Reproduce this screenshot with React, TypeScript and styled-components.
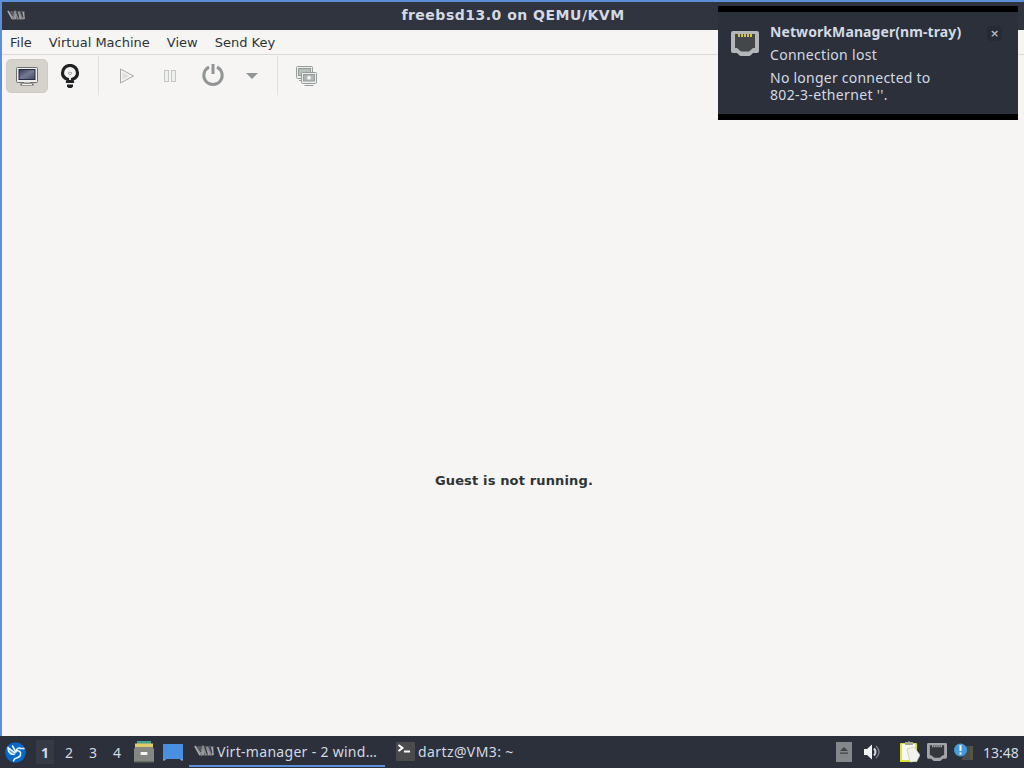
import React from "react";
import styled, { createGlobalStyle } from "styled-components";

const dark = "#2b303b";
const blue = "#5b8fd8";
const light = "#d3dae3";

const GlobalStyle = createGlobalStyle`
  * {
    box-sizing: border-box;
  }

  body {
    margin: 0;
    overflow: hidden;
  }

  svg {
    display: block;
    flex-shrink: 0;
  }
`;

const Desktop = styled.div`
  position: relative;
  display: flex;
  flex-direction: column;
  width: 1024px;
  height: 768px;
  background: #f6f5f4;
  font-family: "DejaVu Sans", sans-serif;
`;

const Window = styled.main`
  flex: 1;
  display: flex;
  flex-direction: column;
  border-top: 2px solid ${blue};
  border-left: 2px solid ${blue};
`;

const TitleBar = styled.header`
  display: grid;
  grid-template-columns: 24px 1fr 24px;
  align-items: center;
  height: 28px;
  padding: 0 5px 2px 5px;
  background: #2f343f;
`;

const Title = styled.h1`
  margin: 0;
  padding-bottom: 1px;
  text-align: center;
  font-size: 14px;
  line-height: 20px;
  letter-spacing: 0.5px;
  color: ${light};
`;

const MenuBar = styled.nav`
  display: flex;
  align-items: center;
  gap: 17px;
  height: 25px;
  padding-left: 8px;
  border-bottom: 1px solid #dcdad8;
  font-size: 13px;
  color: #2e3436;
`;

const ToolBar = styled.div`
  display: flex;
  align-items: center;
  height: 43px;
  padding-bottom: 2px;
  padding-left: 4px;
`;

const ToolButton = styled.button<{ $width: number; $active?: boolean }>`
  display: flex;
  align-items: center;
  justify-content: center;
  width: ${({ $width }) => $width}px;
  height: 34px;
  padding: 0;
  border: 1px solid ${({ $active }) => ($active ? "#cfccc6" : "transparent")};
  border-radius: 5px;
  background: ${({ $active }) => ($active ? "#d5d2cc" : "transparent")};
`;

const Separator = styled.span<{ $before?: number }>`
  width: 1px;
  height: 39px;
  margin: 0 6px 0 ${({ $before = 6 }) => $before}px;
  background: #e2e0de;
`;

const Guest = styled.section`
  flex: 1;
  display: flex;
  align-items: center;
  justify-content: center;
  padding-top: 126px;
  padding-left: 2px;
  font-size: 13px;
  font-weight: bold;
  letter-spacing: 0.15px;
  color: #2e3436;
`;

const Notification = styled.aside`
  position: absolute;
  top: 6px;
  left: 718px;
  display: flex;
  width: 300px;
  height: 114px;
  padding: 11px 13px 0;
  border: solid #000;
  border-width: 6px 0;
  background: ${dark};
  font-family: "Noto Sans", sans-serif;
  color: ${light};
`;

const NotificationIcon = styled.div`
  padding-top: 8px;
`;

const Message = styled.div`
  flex: 1;
  margin-left: 11px;
  font-size: 14px;
  line-height: 17px;
`;

const Line = styled.p<{ $bold?: boolean; $gap?: number; $spacing?: number }>`
  margin: 0 0 ${({ $gap = 0 }) => $gap}px;
  white-space: nowrap;
  font-weight: ${({ $bold }) => ($bold ? 700 : 400)};
  letter-spacing: ${({ $spacing = 0 }) => $spacing}px;
`;

const Close = styled.button`
  width: 15px;
  height: 15px;
  margin: 3px 3px 0 0;
  padding: 0;
  border: 0;
  border-radius: 4px;
  background: #252a34;
  font: bold 11px/14px "DejaVu Sans", sans-serif;
  color: #b4bbc5;
`;

const Panel = styled.footer`
  display: flex;
  align-items: center;
  height: 32px;
  padding: 0 4px 0 5px;
  background: ${dark};
  font-family: "Noto Sans", sans-serif;
  font-size: 14px;
  color: ${light};
`;

const Workspaces = styled.div`
  display: flex;
  margin: 0 2px 0 10px;
`;

const Workspace = styled.span<{ $active?: boolean }>`
  width: 18px;
  height: 24px;
  margin-right: 6px;
  line-height: 26px;
  text-align: center;
  font-size: 14px;
  font-weight: ${({ $active }) => ($active ? 700 : 400)};
  background: ${({ $active }) => ($active ? "#353a44" : "transparent")};
`;

const Launchers = styled.div`
  display: flex;
  align-items: center;
  gap: 9px;
`;

const Task = styled.div<{ $width: number; $active?: boolean; $spacing?: number }>`
  display: flex;
  align-items: center;
  gap: 3px;
  width: ${({ $width }) => $width}px;
  height: 30px;
  margin-left: 6px;
  padding-left: 5px;
  border-bottom: 2px solid ${({ $active }) => ($active ? blue : "transparent")};
  white-space: nowrap;
  letter-spacing: ${({ $spacing = 0 }) => $spacing}px;
`;

const Tray = styled.div`
  display: flex;
  align-items: center;
  gap: 7px;
  margin-left: auto;
`;

const TrayGroup = styled.div`
  display: flex;
  align-items: center;
  gap: 12px;
  margin-right: 12px;
`;

const Clock = styled.time`
  width: 37px;
  margin-left: 2px;
  white-space: nowrap;
`;

const VirtIcon = ({ width }: { width: number }) => (
  <svg width={width} height={width * 0.6} viewBox="0 0 20 12">
    <path d="M0 1h20l-1 10H6L3 6z" fill="#55565c" />
    <g fill="none" strokeWidth="1.700">
      <path d="M1 1l5 9M9 2v8M13 2l2 8M18 2l1 8" stroke="#a9aaae" />
      <path d="M4 2l3 7 2-7 3 8M13 2l4 8" stroke="#8b8c91" />
    </g>
    <path d="M3 1l4 6M11 2l2 6M16 2l2 6" fill="none" stroke="#383940" />
  </svg>
);

const MonitorIcon = () => (
  <svg width="22" height="22" viewBox="0 0 22 22">
    <defs>
      <linearGradient id="screen" x2="1" y2="1">
        <stop stopColor="#30384f" />
        <stop offset=".5" stopColor="#747b91" />
        <stop offset="1" stopColor="#414960" />
      </linearGradient>
    </defs>
    <rect x=".5" y="2.500" width="21" height="15" rx="1" fill="#eeeeec" stroke="#6b6e6c" />
    <rect x="3" y="4.500" width="16" height="10" fill="url(#screen)" stroke="#252b3c" />
    <path d="M8 17h6v2H8z" fill="#b0b2af" />
    <path d="M4.500 19.500h13" stroke="#62656b" strokeWidth="2" />
    <path d="M6 19.500h10" stroke="#eeeeec" />
  </svg>
);

const BulbIcon = () => (
  <svg width="20" height="24" viewBox="0 0 20 24" fill="none">
    <path
      d="M7.500 17.500v-2.200C4 13.900 2.500 11.800 2.500 9a7.500 7.500 0 0 1 15 0c0 2.800-1.500 4.900-5 6.300v2.200z"
      stroke="#1f2122"
      strokeWidth="3.200"
    />
    <path d="M8 9l2 2 2-2-2-1z" stroke="#a5a7a7" />
    <path d="M7 20.500h6v2L11.500 24h-3L7 22.500z" fill="#1f2122" />
  </svg>
);

const PlayIcon = () => (
  <svg width="16" height="16" viewBox="0 0 16 16" fill="#f2f1f0" stroke="#a7a9a8">
    <path d="M1.500 1L14.500 8l-13 7z" />
    <path d="M3.500 4.500L10 8l-6.500 3.500z" fill="#dddedd" stroke="none" />
  </svg>
);

const PauseIcon = () => (
  <svg width="12" height="14" viewBox="0 0 12 14" fill="#edf0ed" stroke="#c3c7c3">
    <rect x=".5" y="1.500" width="4" height="11" />
    <rect x="7.500" y="1.500" width="4" height="11" />
  </svg>
);

const PowerIcon = () => (
  <svg width="24" height="24" viewBox="0 0 24 24" fill="none" stroke="#929595" strokeWidth="3">
    <path d="M8 3.100A9.200 9.200 0 1 0 16 3.100" />
    <path d="M12 0v10" />
  </svg>
);

const SnapshotIcon = () => (
  <svg width="22" height="22" viewBox="0 0 22 22" fill="#eceeed" stroke="#969e9c">
    <rect x=".5" y="1.500" width="16" height="12" rx="1" />
    <rect x="2.500" y="3.500" width="12" height="7" fill="#b7bdbb" />
    <path d="M3 15.500h5" />
    <rect x="5.500" y="7.500" width="15" height="11" rx="1" />
    <rect x="7.500" y="9.500" width="11" height="6.500" fill="#b0b6b4" />
    <circle cx="13" cy="12.700" r="2" fill="#f4f5f4" stroke="none" />
    <path d="M8.500 20.500h9" />
  </svg>
);

const EthernetIcon = ({ size, tray }: { size: number; tray?: boolean }) => (
  <svg width={size} height={size * 0.9} viewBox="0 0 28 25">
    <path
      d="M2 0h24q2 0 2 2v18q0 2-2 2h-4l-2 2q-1 1-2 1H10q-1 0-2-1l-2-2H2q-2 0-2-2V2q0-2 2-2z"
      fill={tray ? "#a3a5a9" : "#b4b6b9"}
    />
    <path d="M4 3h20v14h-2l-4 3.500h-8L6 17H4z" fill={tray ? "#34383d" : "#43474a"} />
    <path
      d="M8 3v3M11 3v3M14 3v3M17 3v3M20 3v3"
      stroke={tray ? "#b5b6b7" : "#e3cf49"}
      strokeWidth="1.800"
    />
  </svg>
);

const StartIcon = () => (
  <svg width="21" height="21" viewBox="0 0 21 21">
    <circle cx="10.500" cy="10.500" r="10.300" fill="#0868c9" />
    <path d="M3 5l7 5.500L7 4l4.500 6-1 2.500-3 .5C4.500 12.500 2.500 9 3 5z" fill="#5fa5e6" />
    <g fill="none" stroke="#eff8ff" strokeWidth="1.500" strokeLinecap="round" strokeLinejoin="round">
      <path d="M3 5.500l6.500 5M3 5.500c0 4 2 6.800 6 7M7.500 4l3.500 6" />
      <path d="M19 6.500h-3.500c-2-1.200-4 0-4 2.500 1.500-.5 3 0 4 1.500.5 3-1.500 5-4 5.500-1.800.3-2.500 1.200-3 3" />
    </g>
  </svg>
);

const FilesIcon = () => (
  <svg width="20" height="22" viewBox="0 0 20 22">
    <path d="M3 0h14v5H3z" fill="#45a191" />
    <path d="M1 2.500h18v6H1z" fill="#e0cb6b" />
    <path d="M1.500 6h17L20 8v12H0V8z" fill="#858783" />
    <path d="M0 20h20v1.500H0z" fill="#666963" />
    <rect x="6.500" y="11" width="7" height="3" rx="1" fill="#f5f5f1" />
  </svg>
);

const DesktopIcon = () => (
  <svg width="20" height="18" viewBox="0 0 20 18">
    <path d="M0 1h20v16h-3v-1H3v1H0z" fill="#4b8fe0" />
    <path d="M0 17h2M18 17h2" stroke="#8ebcf0" />
  </svg>
);

const TerminalIcon = () => (
  <svg width="19" height="19" viewBox="0 0 19 19">
    <rect width="19" height="19" rx="1" fill="#4b4a4c" />
    <path d="M2.500 3l4 3-4 3M8 9.500h6" fill="none" stroke="#fff" strokeWidth="2" />
  </svg>
);

const EjectIcon = () => (
  <svg width="16" height="20" viewBox="0 0 16 20">
    <path d="M0 0h16v20H0z" fill="#85888b" />
    <path d="M4 9l4-4 4 4zM4 10.500h8v1.300H4z" fill="#40444b" />
  </svg>
);

const VolumeIcon = () => (
  <svg width="17" height="16" viewBox="0 0 17 16" fill="none">
    <path d="M0 5h3l5-4.500v15L3 11H0z" fill="#f1f2f4" />
    <path d="M10 4.500q3 3.500 0 7" stroke="#d5d8dd" strokeWidth="2" />
    <path d="M12 2q6 6 0 12" stroke="#777c85" strokeWidth="1.500" />
  </svg>
);

const ClipboardIcon = () => (
  <svg width="20" height="22" viewBox="0 0 20 22">
    <path d="M0 3q0-1 1-1h15q1 0 1 1v18H0z" fill="#dce33b" />
    <path d="M2 3h13v16H2z" fill="#f8f8ef" />
    <path d="M5 1h3q1-2 2 0h3v3H5z" fill="#a5a797" />
    <path d="M7 8l7-2 6 8-3 6-7 1z" fill="#f1f1ed" stroke="#c6c7c0" strokeWidth=".7" />
  </svg>
);

const AlertIcon = () => (
  <svg width="20" height="18" viewBox="0 0 20 18">
    <path d="M10 3h9v14H8z" fill="#484e4c" />
    <path d="M16 3h3v14h-3z" fill="#56573f" />
    <circle cx="6.500" cy="7" r="6.500" fill="#439bdd" />
    <path d="M6.500 2v6M6.500 9.500v2" stroke="#fff" strokeWidth="2" />
  </svg>
);

const App = () => (
  <Desktop>
    <GlobalStyle />
    <Window>
      <TitleBar>
        <VirtIcon width={18} />
        <Title>freebsd13.0 on QEMU/KVM</Title>
      </TitleBar>
      <MenuBar>
        {["File", "Virtual Machine", "View", "Send Key"].map((item) => (
          <span key={item}>{item}</span>
        ))}
      </MenuBar>
      <ToolBar>
        <ToolButton $width={42} $active>
          <MonitorIcon />
        </ToolButton>
        <ToolButton $width={44}>
          <BulbIcon />
        </ToolButton>
        <Separator />
        <ToolButton $width={43}>
          <PlayIcon />
        </ToolButton>
        <ToolButton $width={44}>
          <PauseIcon />
        </ToolButton>
        <ToolButton $width={42}>
          <PowerIcon />
        </ToolButton>
        <ToolButton $width={36}>
          <svg width="12" height="6" viewBox="0 0 12 6">
            <path d="M0 0h12L6 6z" fill="#929595" />
          </svg>
        </ToolButton>
        <Separator $before={7} />
        <ToolButton $width={46}>
          <SnapshotIcon />
        </ToolButton>
      </ToolBar>
      <Guest>Guest is not running.</Guest>
    </Window>

    <Panel>
      <StartIcon />
      <Workspaces>
        {[1, 2, 3, 4].map((n) => (
          <Workspace key={n} $active={n === 1}>
            {n}
          </Workspace>
        ))}
      </Workspaces>
      <Launchers>
        <FilesIcon />
        <DesktopIcon />
      </Launchers>
      <Task $width={196} $active $spacing={0.3}>
        <VirtIcon width={20} />
        Virt-manager - 2 wind…
      </Task>
      <Task $width={140} $spacing={0.4}>
        <TerminalIcon />
        dartz@VM3: ~
      </Task>
      <Tray>
        <TrayGroup>
          <EjectIcon />
          <VolumeIcon />
        </TrayGroup>
        <ClipboardIcon />
        <EthernetIcon size={20} tray />
        <AlertIcon />
        <Clock>13:48</Clock>
      </Tray>
    </Panel>

    <Notification>
      <NotificationIcon>
        <EthernetIcon size={28} />
      </NotificationIcon>
      <Message>
        <Line $bold $gap={6} $spacing={0.09}>
          NetworkManager(nm-tray)
        </Line>
        <Line $gap={6} $spacing={0.3}>
          Connection lost
        </Line>
        <Line $spacing={0.24}>No longer connected to</Line>
        <Line $spacing={0.35}>802-3-ethernet &apos;&apos;.</Line>
      </Message>
      <Close>×</Close>
    </Notification>
  </Desktop>
);

export default App;
